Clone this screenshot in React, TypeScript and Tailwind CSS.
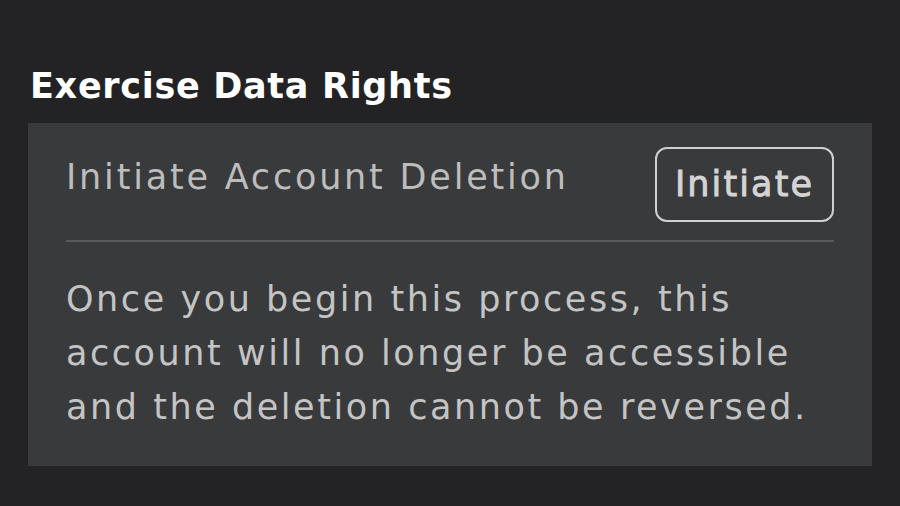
export default function App() {
  return (
    <div
      className="w-[900px] h-[506px] bg-[#232325] pt-[66px] px-[28px] overflow-hidden"
      style={{ fontFamily: '"DejaVu Sans", "Open Sans", sans-serif' }}
    >
      <h1 className="pl-[2px] text-[35px] leading-[40px] font-bold tracking-[0.02em] text-white">Exercise Data Rights</h1>
      <div className="mt-[17px] bg-[#393a3c] px-[38px] pt-[24px] pb-[32px]">
        <div className="flex items-start justify-between">
          <p className="pt-[10px] text-[35px] leading-[40px] tracking-[0.08em] text-[#bdbdbd]">Initiate Account Deletion</p>
          <button className="w-[179px] h-[75px] rounded-[12px] border-2 border-[#d0d0d0] text-[35px] tracking-[0.06em] text-[#d4d4d4] [-webkit-text-stroke:0.9px_#d4d4d4]">
            Initiate
          </button>
        </div>
        <div className="mt-[18px] h-[2px] bg-[#595a5c]" />
        <p className="mt-[30px] text-[35px] leading-[54px] tracking-[0.073em] text-[#c4c4c4]">
          Once you begin this process, this
          <br />
          account will no longer be accessible
          <br />
          and the deletion cannot be reversed.
        </p>
      </div>
    </div>
  )
}
